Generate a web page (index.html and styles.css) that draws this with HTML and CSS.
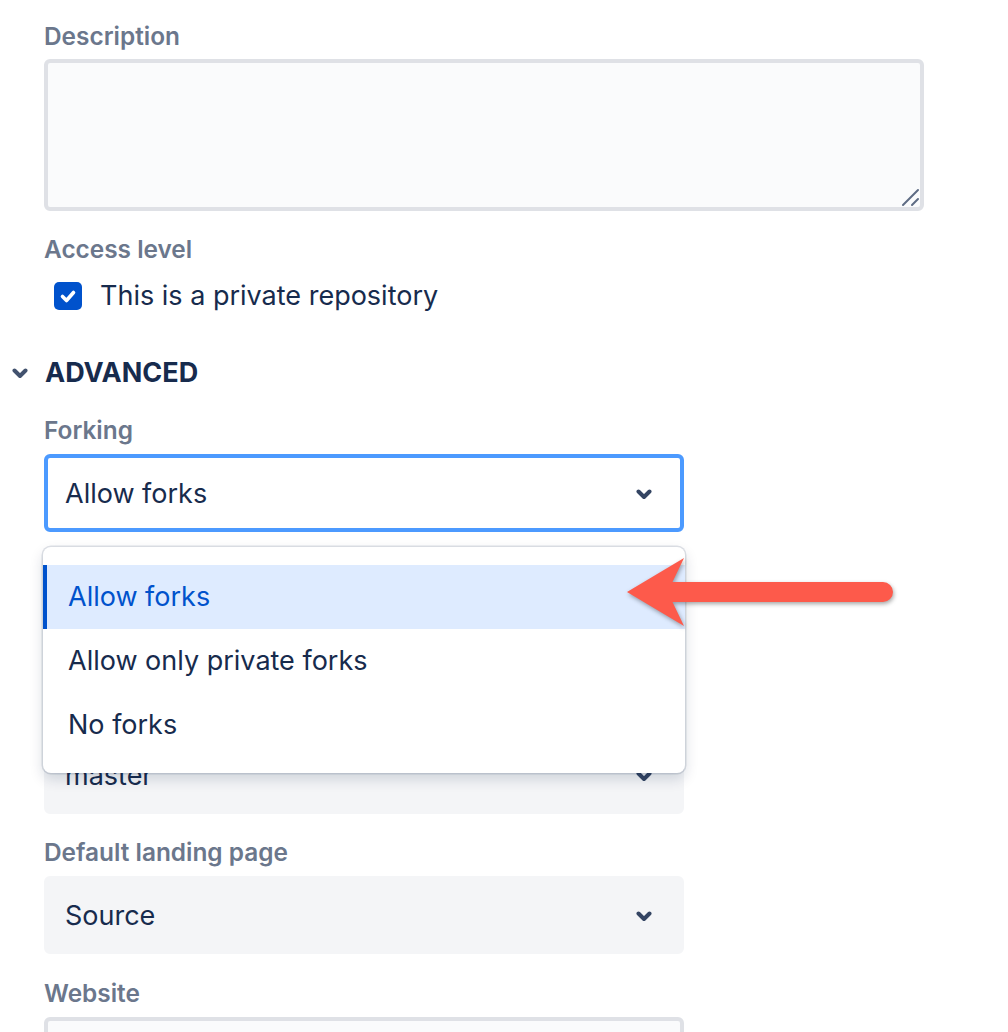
FILE: index.html
```html
<!DOCTYPE html>
<html lang="en">
<head>
<meta charset="utf-8">
<title>Repository settings</title>
<link rel="stylesheet" href="styles.css">
</head>
<body>
<div class="page">
  <div class="field">
    <label class="label">Description</label>
    <div class="textarea-wrap">
      <textarea class="textarea"></textarea>
      <svg class="grip" width="20" height="20" viewBox="0 0 20 20"><path d="M3 18 L18 3 M12 18 L18 12" fill="none" stroke="#5e6c84" stroke-width="2" stroke-linecap="round"/></svg>
    </div>
  </div>

  <div class="field">
    <div class="label">Access level</div>
    <div class="check-row">
      <span class="checkbox">
        <svg width="28" height="28" viewBox="0 0 28 28"><path d="M8.5 14.5 L12.5 18.5 L19.5 10.5" fill="none" stroke="#fff" stroke-width="3.6" stroke-linecap="round" stroke-linejoin="round"/></svg>
      </span>
      <span class="check-text">This is a private repository</span>
    </div>
  </div>

  <div class="section-head">
    <svg class="chev" width="16" height="11" viewBox="0 0 16 11"><path d="M2.5 2.5 L8 8 L13.5 2.5" fill="none" stroke="#42526e" stroke-width="4" stroke-linecap="round" stroke-linejoin="round"/></svg>
    <span>ADVANCED</span>
  </div>

  <div class="field field--forking">
    <div class="label">Forking</div>
    <div class="select select--focus">
      <span>Allow forks</span>
      <svg class="chev" width="16" height="11" viewBox="0 0 16 11"><path d="M2.5 2.5 L8 8 L13.5 2.5" fill="none" stroke="#344563" stroke-width="4" stroke-linecap="round" stroke-linejoin="round"/></svg>
    </div>
    <div class="menu">
      <div class="menu-item menu-item--selected">Allow forks</div>
      <div class="menu-item">Allow only private forks</div>
      <div class="menu-item">No forks</div>
    </div>
  </div>

  <div class="field field--branch">
    <div class="select">
      <span>master</span>
      <svg class="chev" width="16" height="11" viewBox="0 0 16 11"><path d="M2.5 2.5 L8 8 L13.5 2.5" fill="none" stroke="#344563" stroke-width="4" stroke-linecap="round" stroke-linejoin="round"/></svg>
    </div>
  </div>

  <div class="field">
    <div class="label">Default landing page</div>
    <div class="select">
      <span>Source</span>
      <svg class="chev" width="16" height="11" viewBox="0 0 16 11"><path d="M2.5 2.5 L8 8 L13.5 2.5" fill="none" stroke="#344563" stroke-width="4" stroke-linecap="round" stroke-linejoin="round"/></svg>
    </div>
  </div>

  <div class="field field--website">
    <div class="label">Website</div>
    <div class="input"></div>
  </div>

  <svg class="arrow" width="290" height="90" viewBox="0 0 290 90">
    <path d="M7 42 L64 8 L52.5 32 L263 32 A10 10 0 0 1 263 52 L52.5 52 L64 76 Z" fill="#fd5a4b"/>
  </svg>
</div>
</body>
</html>
```

FILE: styles.css
```css
html, body {
  margin: 0;
  background: #ffffff;
}

body {
  font-family: Inter, "Noto Sans", sans-serif;
  color: #172b4d;
  font-size: 27px;
  line-height: 36px;
}

.page {
  position: relative;
  padding: 20px 0 0 44px;
  height: 1012px;
  overflow: hidden;
}

.field {
  margin-top: 22px;
}

.field:first-child {
  margin-top: 0;
}

.field--forking {
  position: relative;
  z-index: 5;
  margin-top: 23px;
  width: 640px;
}

.field--branch {
  margin-top: 204px;
}

.field--website {
  margin-top: 23px;
}

.label {
  display: block;
  font-size: 24.4px;
  font-weight: 600;
  line-height: 32px;
  color: #6b778c;
  margin-bottom: 8px;
}

.field:first-child .label {
  margin-bottom: 7px;
}

.textarea-wrap {
  position: relative;
  width: 880px;
}

.textarea {
  display: block;
  box-sizing: border-box;
  width: 880px;
  height: 152px;
  margin: 0;
  padding: 12px;
  border: 4px solid #dfe1e6;
  border-radius: 6px;
  background: #fafbfc;
  font: inherit;
  resize: none;
  outline: none;
}

.grip {
  position: absolute;
  right: 4px;
  bottom: 4px;
}

.check-row {
  display: flex;
  align-items: center;
  gap: 18px;
  padding-left: 10px;
  margin-top: 13px;
  height: 36px;
}

.checkbox {
  display: block;
  width: 28px;
  height: 28px;
  border-radius: 5px;
  background: #0052cc;
}

.checkbox svg {
  display: block;
}

.section-head {
  display: flex;
  align-items: center;
  gap: 17px;
  margin: 41px 0 0 -32px;
  height: 36px;
  font-size: 27px;
  font-weight: 700;
  color: #172b4d;
}

.chev {
  display: block;
  flex: none;
}

.select {
  box-sizing: border-box;
  width: 640px;
  height: 78px;
  display: flex;
  align-items: center;
  justify-content: space-between;
  padding: 2px 28px 0 17px;
  border: 4px solid #f4f5f7;
  border-radius: 6px;
  background: #f4f5f7;
  color: #172b4d;
}

.select--focus {
  border-color: #4c9aff;
  background: #ffffff;
}

.input {
  box-sizing: border-box;
  width: 640px;
  height: 78px;
  border: 4px solid #dfe1e6;
  border-radius: 6px;
  background: #fafbfc;
}

.menu {
  position: absolute;
  top: calc(100% + 15px);
  left: -1px;
  width: 642px;
  box-sizing: border-box;
  padding: 18px 0 16px;
  background: #ffffff;
  border-radius: 8px;
  box-shadow: 0 0 0 1.5px rgba(9, 30, 66, 0.13), 0 6px 14px rgba(9, 30, 66, 0.16);
}

.menu-item {
  padding: 14px 25px;
  line-height: 36px;
  color: #172b4d;
}

.menu-item--selected {
  background: #deebff;
  color: #0052cc;
  border-left: 4px solid #0052cc;
  padding-left: 21px;
}

.arrow {
  position: absolute;
  left: 620px;
  top: 550px;
  z-index: 10;
  filter: drop-shadow(1px 2px 2px rgba(0, 0, 0, 0.35));
}
```
